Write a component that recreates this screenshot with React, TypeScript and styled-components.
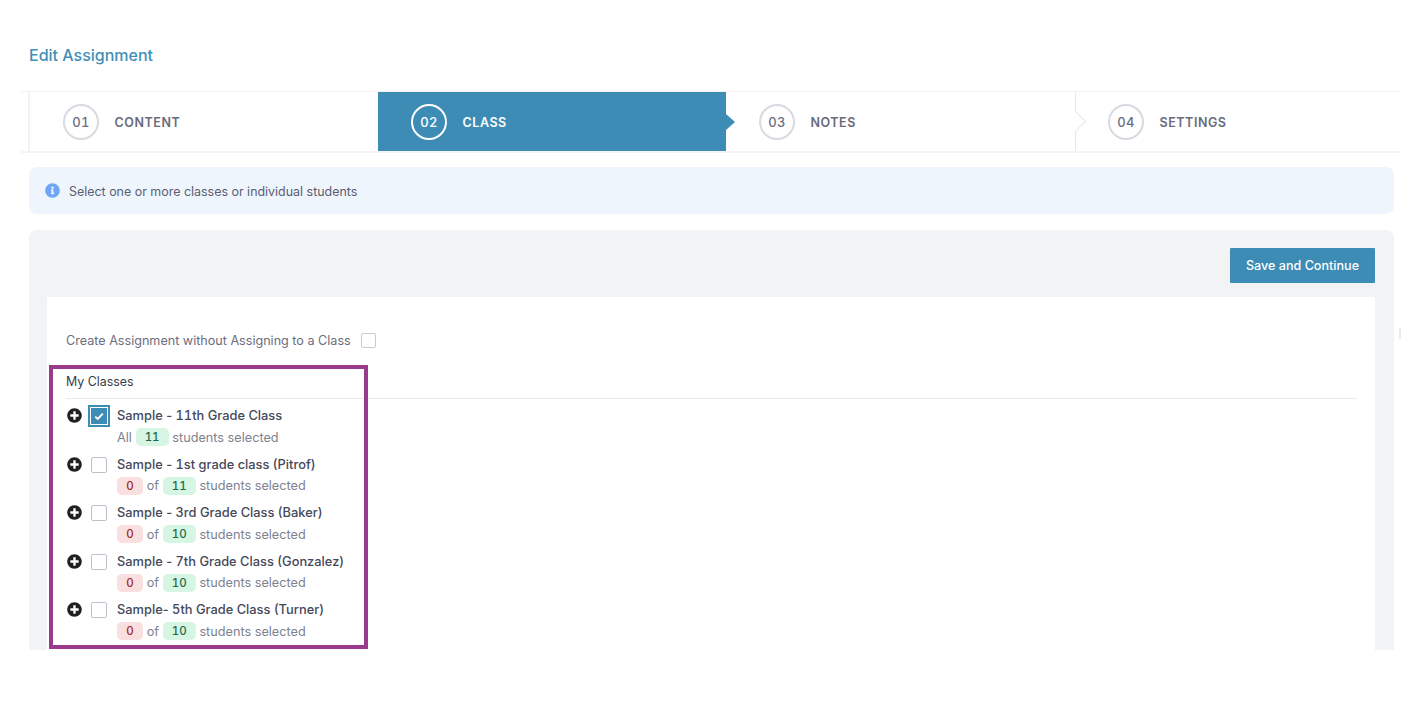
import { FaInfoCircle, FaPlusCircle } from "react-icons/fa";
import styled, { createGlobalStyle } from "styled-components";

interface ClassInterface {
  name: string;
  selected: number;
  total: number;
}

const steps = [
  { num: "01", label: "CONTENT" },
  { num: "02", label: "CLASS" },
  { num: "03", label: "NOTES" },
  { num: "04", label: "SETTINGS" },
];

const classes: ClassInterface[] = [
  { name: "Sample - 11th Grade Class", selected: 11, total: 11 },
  { name: "Sample - 1st grade class (Pitrof)", selected: 0, total: 11 },
  { name: "Sample - 3rd Grade Class (Baker)", selected: 0, total: 10 },
  { name: "Sample - 7th Grade Class (Gonzalez)", selected: 0, total: 10 },
  { name: "Sample- 5th Grade Class (Turner)", selected: 0, total: 10 },
];

// digits in the names are wider than the default Inter ones
const renderName = (name: string) =>
  name.split(/(\d+)/).map((part, i) => (i % 2 ? <Digits key={i}>{part}</Digits> : part));

const App = () => {
  return (
    <Page>
      <GlobalStyle />
      <Title>Edit Assignment</Title>
      <Stepper>
        {steps.map((step, i) => (
          <Step key={step.num} $active={i === 1} $index={i}>
            <StepNumber $active={i === 1}>{step.num}</StepNumber>
            <StepLabel $active={i === 1}>{step.label}</StepLabel>
          </Step>
        ))}
      </Stepper>
      <Alert>
        <FaInfoCircle size={15} color="#6ea5f4" />
        <AlertText>Select one or more classes or individual students</AlertText>
      </Alert>
      <Panel>
        <PanelHeader>
          <SaveButton>Save and Continue</SaveButton>
        </PanelHeader>
        <Card>
          <NoClassRow>
            <span>Create Assignment without Assigning to a Class</span>
            <CheckBox />
          </NoClassRow>
          <SectionTitle>My Classes</SectionTitle>
          <ClassList>
            {classes.map((item) => {
              const all = item.selected === item.total;
              return (
                <ClassRow key={item.name}>
                  <PlusIcon size={15} />
                  {all ? (
                    <CheckedBox>
                      <svg width="10" height="9" viewBox="0 0 10 9">
                        <path d="M1.2 4.6 L3.8 7 L8.8 1.6" fill="none" stroke="#fff" strokeWidth="1.9" />
                      </svg>
                    </CheckedBox>
                  ) : (
                    <RowCheck />
                  )}
                  <ClassInfo>
                    <ClassName>{renderName(item.name)}</ClassName>
                    <ClassCount>
                      {all ? <span>All</span> : <Badge $tone="red">{item.selected}</Badge>}
                      {!all && <span>of</span>}
                      <Badge $tone="green">{item.total}</Badge>
                      <span>students selected</span>
                    </ClassCount>
                  </ClassInfo>
                </ClassRow>
              );
            })}
          </ClassList>
          <Highlight />
        </Card>
      </Panel>
      <EdgeMark />
    </Page>
  );
};

export default App;

const GlobalStyle = createGlobalStyle`
  html, body {
    margin: 0;
    padding: 0;
    background: #fff;
  }
  body {
    font-family: Inter, "Liberation Sans", sans-serif;
    font-size: 13px;
    color: #3f4254;
  }
`;

const Page = styled.div`
  position: relative;
  width: 1424px;
  height: 650px;
  overflow: hidden;
  box-sizing: border-box;
  padding-top: 45px;
`;

const Title = styled.h1`
  margin: 0 0 26px 29px;
  font-size: 16px;
  line-height: 20px;
  font-weight: 500;
  color: #3f8fb9;
`;

const Stepper = styled.div`
  display: grid;
  grid-template-columns: 350px 348px 349px 1fr;
  box-sizing: border-box;
  width: 1379px;
  height: 62px;
  margin-left: 21px;
  padding-left: 7px;
  border-top: 1px solid #f2f3f5;
  border-bottom: 2px solid #f3f4f6;
`;

const Step = styled.div<{ $active: boolean; $index: number }>`
  position: relative;
  z-index: ${({ $active }) => ($active ? 2 : 0)};
  display: flex;
  align-items: center;
  gap: 15.5px;
  padding-top: 1px;
  padding-left: ${({ $index }) => ($index === 3 ? "32px" : "33px")};
  background: ${({ $active }) => ($active ? "#3c8cb6" : "#fff")};
  border-left: ${({ $index }) =>
    $index === 0 ? "2px solid #f1f2f4" : $index === 3 ? "1px solid #e6e7ea" : "none"};
  box-sizing: border-box;

  ${({ $index }) =>
    $index === 3 &&
    `
    &::before {
      content: "";
      position: absolute;
      left: -8px;
      top: 22px;
      width: 15px;
      height: 15px;
      box-sizing: border-box;
      background: #fff;
      border-top: 1px solid #e6e7ea;
      border-right: 1px solid #e6e7ea;
      transform: rotate(45deg);
    }
  `}

  ${({ $active }) =>
    $active &&
    `
    &::after {
      content: "";
      position: absolute;
      right: -9px;
      top: 22px;
      border-left: 9px solid #3c8cb6;
      border-top: 8px solid transparent;
      border-bottom: 8px solid transparent;
    }
  `}
`;

const StepNumber = styled.div<{ $active: boolean }>`
  position: relative;
  z-index: 1;
  display: flex;
  align-items: center;
  justify-content: center;
  width: 36px;
  height: 36px;
  box-sizing: border-box;
  border-radius: 50%;
  border: 2px solid ${({ $active }) => ($active ? "#fff" : "#d9dae1")};
  color: ${({ $active }) => ($active ? "#fff" : "#6c6f80")};
  font-size: 13px;
  font-weight: 500;
  font-feature-settings: "tnum";
  letter-spacing: 0.4px;
`;

const StepLabel = styled.span<{ $active: boolean }>`
  font-size: 12.5px;
  font-weight: 600;
  letter-spacing: 0.55px;
  color: ${({ $active }) => ($active ? "#fff" : "#686b7c")};
`;

const Alert = styled.div`
  display: flex;
  align-items: center;
  gap: 9px;
  box-sizing: border-box;
  width: 1365px;
  height: 47px;
  margin: 14px 0 16px 29px;
  padding-left: 16px;
  border-radius: 8px;
  background: #eef5fd;
  color: #5b5e70;
  font-size: 12.45px;
`;

const AlertText = styled.span`
  margin-top: 1px;
`;

const Panel = styled.div`
  box-sizing: border-box;
  width: 1365px;
  height: 420px;
  margin-left: 29px;
  padding: 18px 19px 0 18px;
  border-radius: 8px 8px 0 0;
  background: #f2f3f5;
`;

const PanelHeader = styled.div`
  display: flex;
  justify-content: flex-end;
  margin-bottom: 14px;
`;

const SaveButton = styled.button`
  width: 145px;
  height: 35px;
  border: 0;
  border-radius: 1px;
  background: #3c8cb6;
  color: #fff;
  font-family: inherit;
  font-size: 12.6px;
  font-weight: 500;
`;

const Card = styled.div`
  position: relative;
  height: 353px;
  box-sizing: border-box;
  padding: 34px 18px 0 19px;
  background: #fff;
`;

const NoClassRow = styled.label`
  display: flex;
  align-items: center;
  gap: 10px;
  height: 18px;
  color: #6b6e7e;
  font-size: 12.6px;
`;

const CheckBox = styled.span`
  display: block;
  width: 15px;
  height: 15px;
  box-sizing: border-box;
  border: 1px solid #c9cbd3;
  border-radius: 2px;
  background: #fff;
`;

const SectionTitle = styled.div`
  margin-top: 25px;
  padding-bottom: 8px;
  border-bottom: 1px solid #e9eaee;
  color: #3a3c4a;
  font-size: 12.4px;
  line-height: 16px;
`;

const ClassList = styled.div`
  display: flex;
  flex-direction: column;
  padding-top: 9px;
`;

const ClassRow = styled.div`
  display: flex;
  align-items: flex-start;
  height: 48.5px;
`;

const PlusIcon = styled(FaPlusCircle)`
  flex: none;
  margin: 0 9px 0 1px;
  color: #1f2022;
`;

const RowCheck = styled(CheckBox)`
  flex: none;
  width: 16px;
  height: 16px;
  margin-right: 10px;
  border-color: #bfc1ca;
`;

const CheckedBox = styled(RowCheck)`
  display: flex;
  align-items: center;
  justify-content: center;
  background: #3c8cb6;
  border-color: #3c8cb6;
  box-shadow: 0 0 0 1px #fff, 0 0 0 3px #3c8cb6;
  border-radius: 0;
`;

const ClassInfo = styled.div`
  display: flex;
  flex-direction: column;
  gap: 4px;
`;

const ClassName = styled.div`
  color: #454859;
  font-size: 12.85px;
  font-weight: 500;
  line-height: 16px;
`;

const Digits = styled.span`
  font-feature-settings: "tnum";
`;

const ClassCount = styled.div`
  display: flex;
  align-items: center;
  gap: 3.7px;
  height: 18px;
  color: #7e8190;
  font-size: 12.7px;
`;

const Badge = styled.span<{ $tone: "red" | "green" }>`
  display: inline-flex;
  align-items: center;
  justify-content: center;
  height: 18px;
  min-width: ${({ $tone }) => ($tone === "red" ? "26px" : "33px")};
  border-radius: 5px;
  font-size: 11.5px;
  font-weight: 500;
  font-feature-settings: "tnum";
  background: ${({ $tone }) => ($tone === "red" ? "#f9dfdf" : "#d6f6e3")};
  color: ${({ $tone }) => ($tone === "red" ? "#a12b2b" : "#1f6a4a")};
`;

const Highlight = styled.div`
  position: absolute;
  left: 2px;
  top: 68px;
  width: 319px;
  height: 284px;
  box-sizing: border-box;
  border: 4px solid #993a8b;
  pointer-events: none;
`;

const EdgeMark = styled.div`
  position: absolute;
  left: 1399px;
  top: 328px;
  width: 2px;
  height: 11px;
  background: #e8e9ec;
`;
